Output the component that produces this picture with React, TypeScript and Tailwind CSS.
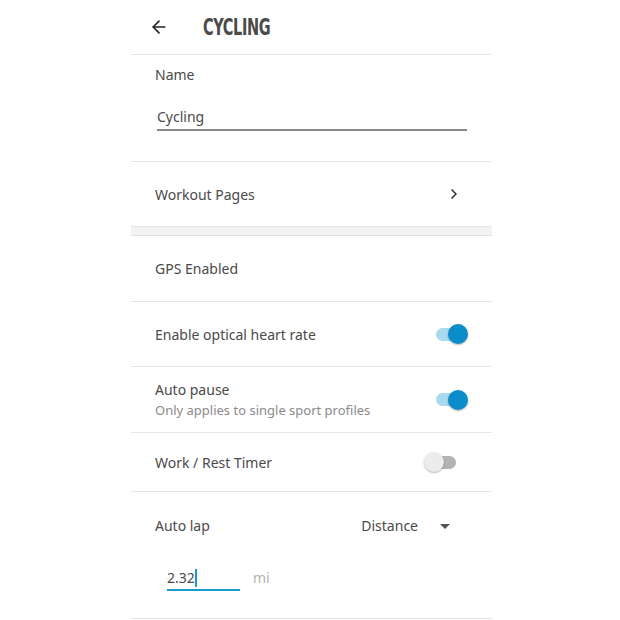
import { ArrowLeft, ChevronRight } from "lucide-react";

function Toggle({ on }: { on: boolean }) {
  return (
    <div className="relative w-[34px] h-[20px] flex items-center">
      <div
        className={`w-[30px] h-[13px] rounded-full mx-auto ${
          on ? "bg-[#a9d9ef]" : "bg-[#b3b3b3]"
        }`}
      ></div>
      <div
        className={`absolute top-0 w-[20px] h-[20px] rounded-full shadow-[0_1px_2px_rgba(0,0,0,0.3)] ${
          on ? "right-0 bg-[#0a8dc8]" : "left-0 bg-[#ececec]"
        }`}
      ></div>
    </div>
  );
}

export default function App() {
  return (
    <div className="w-[620px] h-[620px] bg-white flex justify-center pl-[3px] font-['Noto_Sans',sans-serif] text-[#4a4a4a] overflow-hidden">
      <div className="w-[361px] flex flex-col">
        <div className="h-[55px] flex items-center border-b border-[#e6e6e6] shrink-0">
          <ArrowLeft className="ml-[18px] w-[20px] h-[20px] text-[#222]" strokeWidth={2} />
          <span className="ml-[34px] text-[23px] font-bold tracking-[-0.5px] text-[#4a4a4a] font-['DejaVu_Sans_Condensed','DejaVu_Sans',sans-serif] [font-stretch:condensed] scale-x-[0.7] origin-left">
            CYCLING
          </span>
        </div>

        <div className="h-[107px] border-b border-[#e6e6e6] px-[24px] pt-[10px] shrink-0">
          <div className="text-[14px] leading-[20px]">Name</div>
          <div className="mt-[22px] ml-[2px] mr-[1px] border-b-[2px] border-[#8a8a8a] pb-[2px] text-[14px] leading-[20px]">
            Cycling
          </div>
        </div>

        <div className="h-[65px] border-b border-[#e6e6e6] px-[24px] flex items-center justify-between shrink-0">
          <span className="text-[14px]">Workout Pages</span>
          <ChevronRight className="w-[16px] h-[16px] mr-[6px] text-[#333]" strokeWidth={2.5} />
        </div>

        <div className="h-[9px] bg-[#f2f2f2] border-b border-[#e3e3e3] shrink-0"></div>

        <div className="h-[66px] border-b border-[#e6e6e6] px-[24px] flex items-center shrink-0">
          <span className="text-[14px]">GPS Enabled</span>
        </div>

        <div className="h-[65px] border-b border-[#e6e6e6] px-[24px] flex items-center justify-between shrink-0">
          <span className="text-[14px]">Enable optical heart rate</span>
          <Toggle on={true} />
        </div>

        <div className="h-[66px] border-b border-[#e6e6e6] px-[24px] flex items-center justify-between shrink-0">
          <div className="flex flex-col">
            <span className="text-[14px] leading-[20px]">Auto pause</span>
            <span className="text-[13px] leading-[20px] text-[#8a8a8a]">
              Only applies to single sport profiles
            </span>
          </div>
          <Toggle on={true} />
        </div>

        <div className="h-[59px] border-b border-[#e6e6e6] px-[24px] flex items-center justify-between shrink-0">
          <span className="text-[14px]">Work / Rest Timer</span>
          <div className="mr-[10px]">
            <Toggle on={false} />
          </div>
        </div>

        <div className="h-[127px] border-b border-[#e6e6e6] px-[24px] pt-[24px] shrink-0">
          <div className="flex items-center justify-between">
            <span className="text-[14px] leading-[20px]">Auto lap</span>
            <div className="flex items-center mr-[18px]">
              <span className="text-[14px] leading-[20px]">Distance</span>
              <span className="ml-[22px] w-0 h-0 border-l-[5px] border-r-[5px] border-t-[5px] border-l-transparent border-r-transparent border-t-[#555]"></span>
            </div>
          </div>
          <div className="flex items-end mt-[32px] ml-[12px]">
            <div className="w-[73px] border-b-[2px] border-[#1a9ac9] pb-[1px] flex items-center">
              <span className="text-[14px] leading-[20px]">2.32</span>
              <span className="w-[2px] h-[18px] bg-[#1a9ac9]"></span>
            </div>
            <span className="ml-[13px] mb-[3px] text-[14px] leading-[20px] text-[#b3b3b3]">mi</span>
          </div>
        </div>
      </div>
    </div>
  );
}
